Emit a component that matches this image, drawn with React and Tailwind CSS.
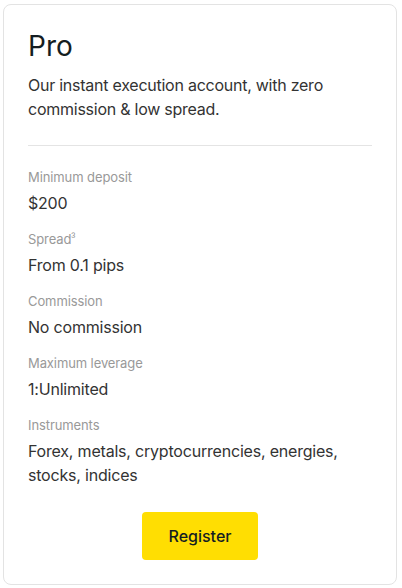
export default function App() {
  const rows = [
    ["Minimum deposit", "$200"],
    [
      <>
        Spread<span className="text-[12px] align-top leading-[16px]" style={{ fontFamily: "'Liberation Sans', sans-serif" }}>³</span>
      </>,
      "From 0.1 pips",
    ],
    ["Commission", "No commission"],
    ["Maximum leverage", "1:Unlimited"],
    ["Instruments", "Forex, metals, cryptocurrencies, energies, stocks, indices"],
  ];
  return (
    <div className="bg-white pl-[3px] pt-[4px] w-[402px] h-[588px]" style={{ fontFamily: "Inter, 'Noto Sans', sans-serif" }}>
      <div className="w-[394px] h-[581px] border border-[#e3e3e3] rounded-[8px] bg-white px-[24px] pt-[23px] pb-[24px] flex flex-col">
        <h1 className="text-[28px] leading-[36px] text-[#141d22] font-normal">Pro</h1>
        <p className="mt-[9px] text-[16px] leading-[24px] text-[#333] tracking-[-0.25px]">
          Our instant execution account, with zero commission &amp; low spread.
        </p>
        <div className="mt-[24px] h-px bg-[#e4e4e4]" />
        <div className="mt-[21px] flex flex-col gap-[14px]">
          {rows.map(([l, v], i) => (
            <div key={i}>
              <div className="text-[13px] leading-[20px] text-[#999] tracking-[-0.1px]">{l}</div>
              <div className="mt-[4px] text-[16px] leading-[24px] text-[#333] tracking-[-0.2px]">{v}</div>
            </div>
          ))}
        </div>
        <div className="mt-auto flex justify-center">
          <button className="w-[116px] h-[48px] rounded-[4px] bg-[#ffde02] text-[16px] font-medium text-[#141d22]">
            Register
          </button>
        </div>
      </div>
    </div>
  );
}
